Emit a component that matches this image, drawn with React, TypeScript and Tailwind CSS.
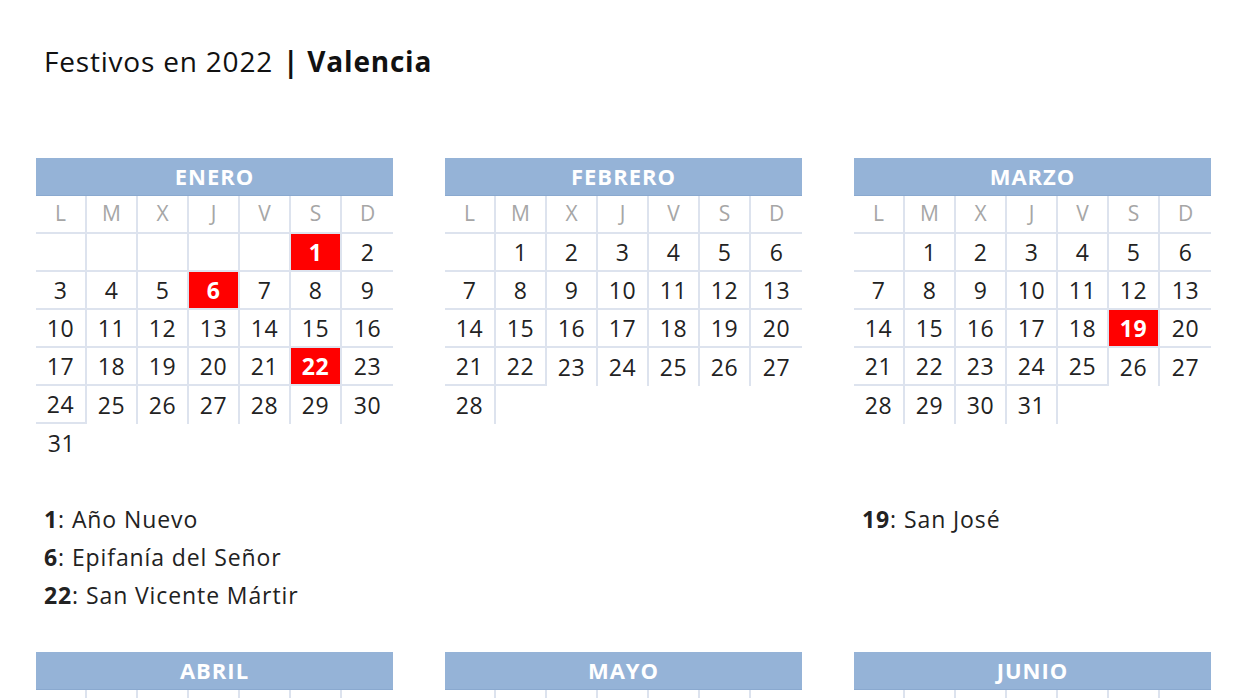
import React from 'react'

type Month = {
  name: string
  start: number // column of day 1 (0 = lunes)
  days: number
  holidays: number[]
  notes: [number, string][]
}

const MONTHS: Month[] = [
  { name: 'ENERO', start: 5, days: 31, holidays: [1, 6, 22], notes: [[1, 'Año Nuevo'], [6, 'Epifanía del Señor'], [22, 'San Vicente Mártir']] },
  { name: 'FEBRERO', start: 1, days: 28, holidays: [], notes: [] },
  { name: 'MARZO', start: 1, days: 31, holidays: [19], notes: [[19, 'San José']] },
  { name: 'ABRIL', start: 4, days: 30, holidays: [15, 18, 25], notes: [[15, 'Viernes Santo'], [18, 'Lunes de Pascua'], [25, 'San Vicente Ferrer']] },
  { name: 'MAYO', start: 6, days: 31, holidays: [], notes: [] },
  { name: 'JUNIO', start: 2, days: 30, holidays: [24], notes: [[24, 'San Juan']] },
]

const LETTERS = ['L', 'M', 'X', 'J', 'V', 'S', 'D']

// 6 semanas x 7 días, null = celda vacía
function buildWeeks(m: Month): (number | null)[][] {
  const cells: (number | null)[] = []
  for (let i = 0; i < 42; i++) {
    const d = i - m.start + 1
    cells.push(d >= 1 && d <= m.days ? d : null)
  }
  const weeks: (number | null)[][] = []
  for (let w = 0; w < 6; w++) weeks.push(cells.slice(w * 7, w * 7 + 7))
  return weeks
}

function MonthBlock({ m }: { m: Month }) {
  const weeks = buildWeeks(m)

  const rightBorder = (w: number, c: number, d: number | null) => {
    if (c === 6) return false
    if (w < 4) return true
    if (w === 4) return d !== null
    return false
  }
  const bottomBorder = (w: number, c: number) => {
    if (w < 3) return true
    if (w === 3) return weeks[4][c] !== null || (c > 0 && weeks[4][c - 1] !== null && m.start !== 5)
    if (w === 4) return weeks[5][c] !== null
    return false
  }

  return (
    <div className="flex flex-col w-[357px]">
      <div className="h-[38px] bg-[#95b3d7] border-b border-[#8aa9cf] flex items-center justify-center text-white font-bold text-[22px] tracking-[1px]">
        {m.name}
      </div>

      {/* Cabecera de días */}
      <div className="grid grid-cols-7">
        {LETTERS.map((l, i) => (
          <div
            key={l}
            className={`h-[38px] flex items-center justify-center text-[21px] text-[#a6a6a6] border-b-2 border-[#dde3ee] ${i < 6 ? 'border-r-2' : ''}`}
          >
            {l}
          </div>
        ))}
      </div>

      {/* Semanas */}
      {weeks.map((week, w) => (
        <div key={w} className="grid grid-cols-7">
          {week.map((d, c) => {
            const holiday = d !== null && m.holidays.includes(d)
            return (
              <div
                key={c}
                className={`h-[38px] flex items-center justify-center text-[23px] tracking-[0.5px] border-[#dde3ee] ${rightBorder(w, c, d) ? 'border-r-2' : ''} ${bottomBorder(w, c) ? 'border-b-2' : ''} ${holiday ? 'bg-[#ff0000] text-white font-bold' : 'text-[#222]'}`}
              >
                {d}
              </div>
            )
          })}
        </div>
      ))}

      <div className="h-[38px]" />

      {/* Leyenda */}
      <div className="flex flex-col">
        {[0, 1, 2].map(i => {
          const n = m.notes[i]
          return (
            <div key={i} className="h-[38px] flex items-center pl-2 text-[23px] tracking-[0.9px] text-[#222] whitespace-nowrap">
              {n && (
                <>
                  <span className="font-bold">{n[0]}</span>
                  <span>: {n[1]}</span>
                </>
              )}
            </div>
          )
        })}
      </div>
    </div>
  )
}

export default function App() {
  return (
    <div className="h-[698px] overflow-hidden bg-white pt-[42px] pl-[36px] font-['Open_Sans','Liberation_Sans',sans-serif]">
      <div className="h-[38px] flex items-center pl-2 text-[28px] tracking-[0.8px] text-[#111] whitespace-nowrap">
        Festivos en 2022 <span className="font-bold ml-[10px]">| Valencia</span>
      </div>

      <div className="mt-[78px] grid grid-cols-[repeat(3,357px)] gap-x-[52px] gap-y-[38px]">
        {MONTHS.map(m => (
          <MonthBlock key={m.name} m={m} />
        ))}
      </div>
    </div>
  )
}
